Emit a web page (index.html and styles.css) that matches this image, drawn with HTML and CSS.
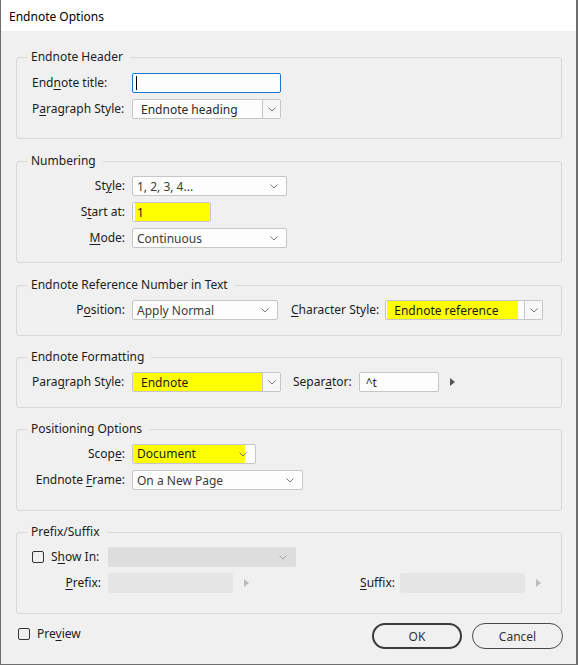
FILE: index.html
```html
<!DOCTYPE html>
<html lang="en">
<head>
<meta charset="utf-8">
<title>Endnote Options</title>
<link rel="stylesheet" href="styles.css">
</head>
<body>
<div class="window">
  <div class="titlebar">Endnote Options</div>
  <div class="content">

    <fieldset class="group g1">
      <legend>Endnote Header</legend>
      <div class="rows">
        <div class="row">
          <span class="lbl">End<u>n</u>ote title:</span>
          <span class="field text focus w-title"><span class="caret"></span></span>
        </div>
        <div class="row">
          <span class="lbl">P<u>a</u>ragraph Style:</span>
          <span class="field combo w-hcombo"><span class="val">Endnote heading</span><span class="btn"><svg class="chev" width="8" height="5" viewBox="0 0 8 5"><polyline points="0.5,0.5 4,4 7.5,0.5"/></svg></span></span>
        </div>
      </div>
    </fieldset>

    <fieldset class="group g2">
      <legend>Numbering</legend>
      <div class="rows">
        <div class="row">
          <span class="lbl r">St<u>y</u>le:</span>
          <span class="field select w-style"><span class="val">1, 2, 3, 4...</span><svg class="chev" width="8" height="5" viewBox="0 0 8 5"><polyline points="0.5,0.5 4,4 7.5,0.5"/></svg></span>
        </div>
        <div class="row">
          <span class="lbl r">S<u>t</u>art at:</span>
          <span class="field text w-start"><span class="hl hl-start">1</span></span>
        </div>
        <div class="row">
          <span class="lbl r"><u>M</u>ode:</span>
          <span class="field select w-style"><span class="val">Continuous</span><svg class="chev" width="8" height="5" viewBox="0 0 8 5"><polyline points="0.5,0.5 4,4 7.5,0.5"/></svg></span>
        </div>
      </div>
    </fieldset>

    <fieldset class="group g3">
      <legend>Endnote Reference Number in Text</legend>
      <div class="rows">
        <div class="row">
          <span class="lbl r">P<u>o</u>sition:</span>
          <span class="field select w-pos"><span class="val">Apply Normal</span><svg class="chev" width="8" height="5" viewBox="0 0 8 5"><polyline points="0.5,0.5 4,4 7.5,0.5"/></svg></span>
          <span class="lbl2 char-lbl"><u>C</u>haracter Style:</span>
          <span class="field combo w-ccombo"><span class="val pl0"><span class="hl hl-ref">Endnote reference</span></span><span class="btn"><svg class="chev" width="8" height="5" viewBox="0 0 8 5"><polyline points="0.5,0.5 4,4 7.5,0.5"/></svg></span></span>
        </div>
      </div>
    </fieldset>

    <fieldset class="group g4">
      <legend>Endnote Formatting</legend>
      <div class="rows">
        <div class="row">
          <span class="lbl">Para<u>g</u>raph Style:</span>
          <span class="field combo w-hcombo"><span class="val hl-full">Endnote</span><span class="btn"><svg class="chev" width="8" height="5" viewBox="0 0 8 5"><polyline points="0.5,0.5 4,4 7.5,0.5"/></svg></span></span>
          <span class="lbl2 sep-lbl">Separ<u>a</u>tor:</span>
          <span class="field text w-sep"><span class="val">^t</span></span>
          <span class="tri"></span>
        </div>
      </div>
    </fieldset>

    <fieldset class="group g5">
      <legend>Positioning Options</legend>
      <div class="rows">
        <div class="row">
          <span class="lbl r">Scop<u>e</u>:</span>
          <span class="field select w-scope pl0"><span class="hl hl-doc">Document</span><svg class="chev" width="8" height="5" viewBox="0 0 8 5"><polyline points="0.5,0.5 4,4 7.5,0.5"/></svg></span>
        </div>
        <div class="row">
          <span class="lbl r">Endnote <u>F</u>rame:</span>
          <span class="field select w-frame"><span class="val">On a New Page</span><svg class="chev" width="8" height="5" viewBox="0 0 8 5"><polyline points="0.5,0.5 4,4 7.5,0.5"/></svg></span>
        </div>
      </div>
    </fieldset>

    <fieldset class="group g6">
      <legend>Prefix/Suffix</legend>
      <div class="rows">
        <div class="row">
          <span class="lbl narrow chk-lbl"><span class="check"></span><span>S<u>h</u>ow In:</span></span>
          <span class="field select disabled w-show"><span class="val"></span><svg class="chev" width="8" height="5" viewBox="0 0 8 5"><polyline points="0.5,0.5 4,4 7.5,0.5"/></svg></span>
        </div>
        <div class="row">
          <span class="lbl narrow r"><u>P</u>refix:</span>
          <span class="field text disabled w-fix"></span>
          <span class="tri dis"></span>
          <span class="suffix">
            <span class="lbl2 suf-lbl"><u>S</u>uffix:</span>
            <span class="field text disabled w-fix"></span>
            <span class="tri dis"></span>
          </span>
        </div>
      </div>
    </fieldset>

    <div class="footer">
      <span class="preview"><span class="check"></span><span>Pre<u>v</u>iew</span></span>
      <span class="buttons">
        <button class="button default">OK</button>
        <button class="button cancel">Cancel</button>
      </span>
    </div>
  </div>
</div>
</body>
</html>
```

FILE: styles.css
```css
* { box-sizing: border-box; }
html, body { margin: 0; padding: 0; }
body {
  font-family: "Noto Sans", "Open Sans", sans-serif;
  font-size: 12px;
  color: #1c1c1c;
  background: #ffffff;
}
u { text-underline-offset: 2px; }

.window {
  width: 578px;
  height: 665px;
  border-left: 1px solid #6e6e6e;
  border-right: 2px solid #6e6e6e;
  border-bottom: 1px solid #6e6e6e;
  background: #f0f0f0;
  display: flex;
  flex-direction: column;
}
.titlebar {
  height: 31px;
  line-height: 31px;
  background: #ffffff;
  padding: 1px 0 0 8px;
  color: #000;
  flex: none;
}
.content {
  flex: 1;
  display: flex;
  flex-direction: column;
  padding: 18px 14px 0 15px;
}

.group {
  margin: 0;
  min-width: 0;
  border: 1px solid #d8d8d8;
  border-radius: 3px;
  padding: 7px 14px 14px 15px;
}
.group legend {
  line-height: 16px;
  padding: 0 7px 0 4px;
  margin-left: -5px;
  color: #1c1c1c;
}
.g1 { padding-top: 8px; padding-bottom: 19px; }
.g2 { margin-top: 14px; padding-bottom: 14px; }
.g3 { margin-top: 14px; padding-bottom: 15px; }
.g4 { margin-top: 13px; padding-bottom: 15px; }
.g5 { margin-top: 13px; padding-bottom: 20px; }
.g6 { margin-top: 13px; padding-bottom: 20px; padding-right: 20px; }

.rows { display: flex; flex-direction: column; gap: 6px; }
.row { display: flex; align-items: center; height: 20px; }

.lbl {
  flex: none;
  width: 93px;
  margin-right: 7px;
  line-height: 20px;
  white-space: nowrap;
}
.lbl.r { text-align: right; }
.lbl.narrow { width: 69px; }
.lbl2 { flex: none; white-space: nowrap; line-height: 20px; }
.char-lbl { margin-left: 13px; margin-right: 6px; }
.sep-lbl { margin-left: 12px; margin-right: 7px; }
.suf-lbl { margin-right: 5px; }

.chk-lbl { display: flex; align-items: center; gap: 7px; }
.check {
  flex: none;
  width: 12px;
  height: 12px;
  border: 1px solid #333;
  border-radius: 2px;
  background: transparent;
}

.field {
  flex: none;
  height: 20px;
  border: 1px solid #c6c6c6;
  border-radius: 2px;
  background: #fdfdfd;
  display: flex;
  align-items: center;
  overflow: hidden;
  color: #2a2a2a;
}
.field .val { white-space: nowrap; }
.text .val { padding-left: 6px; }
.select { justify-content: space-between; padding: 0 8px 0 4px; color: #3c3c3c; }
.select.pl0 { padding-left: 0; }
.combo .val { flex: 1; padding-left: 8px; align-self: stretch; display: flex; align-items: center; }
.combo .val.pl0 { padding-left: 0; }
.combo .btn {
  flex: none;
  width: 18px;
  align-self: stretch;
  border-left: 1px solid #c6c6c6;
  background: #f7f7f7;
  display: flex;
  align-items: center;
  justify-content: center;
}
.chev { flex: none; display: block; }
.chev polyline { fill: none; stroke: #7a7a7a; stroke-width: 1; }

.focus { border-color: #1478d4; }
.caret { width: 1px; height: 14px; background: #000; margin-left: 3px; }

.disabled { background: #dddddd; border-color: #dddddd; }
.text.disabled { background: #e5e5e5; border-color: #e5e5e5; }
.disabled .chev polyline { stroke: #a8a8a8; }

.w-title { width: 149px; }
.w-hcombo { width: 149px; }
.w-style { width: 155px; }
.w-start { width: 79px; }
.w-pos { width: 146px; }
.w-ccombo { width: 158px; }
.w-sep { width: 80px; }
.w-scope { width: 124px; }
.w-frame { width: 171px; }
.w-show { width: 188px; }
.w-fix { width: 125px; }

.hl { background: #ffff00; color: #1c1c1c; white-space: nowrap; display: flex; align-items: center; }
.hl-start { width: 75px; height: 18px; margin-left: 2px; padding-left: 2px; }
.hl-ref { width: 131px; height: 18px; margin-left: 1px; padding-left: 7px; }
.hl-full { background: #ffff00; margin: -1px 0 -1px -1px; padding-left: 9px !important; color: #1c1c1c; }
.hl-doc { flex: none; width: 112px; height: 19px; margin-top: -1px; margin-right: -112px; padding-left: 4px; border-radius: 2px; }
.w-scope { justify-content: flex-start; }
.w-scope .chev { margin-left: auto; position: relative; }

.tri {
  flex: none;
  width: 0;
  height: 0;
  margin-left: 11px;
  border-top: 4px solid transparent;
  border-bottom: 4px solid transparent;
  border-left: 5px solid #555;
}
.tri.dis { border-left-color: #bcbcbc; }
.suffix { margin-left: auto; display: flex; align-items: center; }

.footer {
  margin-top: 9px;
  display: flex;
  align-items: flex-start;
  justify-content: space-between;
}
.preview {
  display: flex;
  align-items: center;
  gap: 7px;
  margin-left: 2px;
  margin-top: 5px;
  line-height: 12px;
}
.buttons { display: flex; gap: 10px; margin-right: -1px; }
.button {
  width: 90px;
  height: 26px;
  border-radius: 13px;
  border: 1px solid #4a4a4a;
  background: transparent;
  font-family: inherit;
  font-size: 12px;
  color: #333;
  padding: 0;
}
.button.default { border: 2px solid #3a3a3a; }
.button.cancel { width: 91px; }
```
